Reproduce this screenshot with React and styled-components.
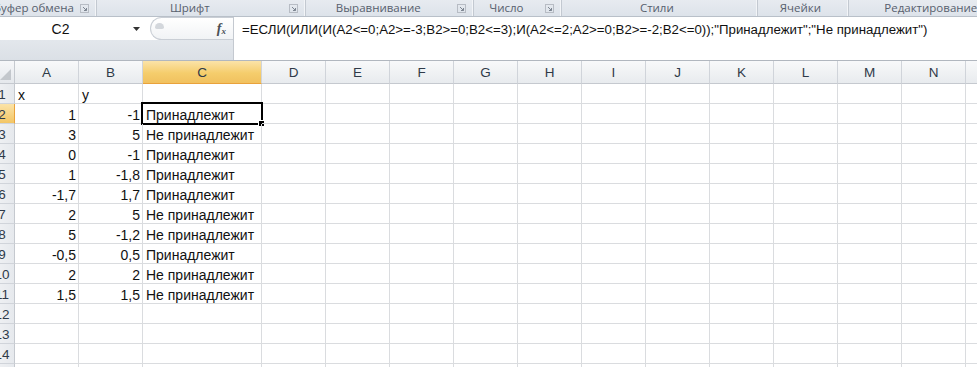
import React from 'react'
import styled, { createGlobalStyle } from 'styled-components'

const GlobalStyle = createGlobalStyle`
    html, body {
        margin: 0;
        padding: 0;
        background: #ffffff;
        overflow: hidden;
    }
`

const groups = [
    { label: 'Буфер обмена', width: 106, launcher: true, shift: 8 },
    { label: 'Шрифт', width: 209, launcher: true },
    { label: 'Выравнивание', width: 168, launcher: true },
    { label: 'Число', width: 88, launcher: true },
    { label: 'Стили', width: 196 },
    { label: 'Ячейки', width: 91 },
    { label: 'Редактирование', width: 170 },
]

const columns = [
    { name: 'A', width: 64 },
    { name: 'B', width: 64 },
    { name: 'C', width: 119 },
    ...'DEFGHIJKLMNO'.split('').map((name) => ({ name, width: 64 })),
]

const rows = [
    ['x', 'y', ''],
    ['1', '-1', 'Принадлежит'],
    ['3', '5', 'Не принадлежит'],
    ['0', '-1', 'Принадлежит'],
    ['1', '-1,8', 'Принадлежит'],
    ['-1,7', '1,7', 'Принадлежит'],
    ['2', '5', 'Не принадлежит'],
    ['5', '-1,2', 'Не принадлежит'],
    ['-0,5', '0,5', 'Принадлежит'],
    ['2', '2', 'Не принадлежит'],
    ['1,5', '1,5', 'Не принадлежит'],
    ['', '', ''],
    ['', '', ''],
    ['', '', ''],
    ['', '', ''],
]

const formula = '=ЕСЛИ(ИЛИ(И(A2<=0;A2>=-3;B2>=0;B2<=3);И(A2<=2;A2>=0;B2>=-2;B2<=0));"Принадлежит";"Не принадлежит")'

const App = () => {
    return (
        <Frame>
            <GlobalStyle />
            <Ribbon>
                {groups.map((g) => (
                    <Group key={g.label} $width={g.width}>
                        <GroupLabel $shift={g.shift || 0}>{g.label}</GroupLabel>
                        {g.launcher && (
                            <Launcher viewBox="0 0 9 9">
                                <rect x="0.5" y="0.5" width="8" height="8" fill="none" stroke="#b7bcc4" />
                                <path d="M3 3 L6.5 6.5 M4 6.5 H6.5 V4" stroke="#7d8591" fill="none" />
                            </Launcher>
                        )}
                    </Group>
                ))}
            </Ribbon>
            <Page>
                <FormulaBar>
                    <NameArea>
                        <NameRow>
                            <NameBox>
                                <NameText>C2</NameText>
                                <DropArrow viewBox="0 0 7 4">
                                    <path d="M0 0 H7 L3.5 4 Z" fill="#333" />
                                </DropArrow>
                            </NameBox>
                            <FxButton>
                                <Knob />
                                <Fx>
                                    f<sub>x</sub>
                                </Fx>
                            </FxButton>
                        </NameRow>
                        <NameShelf />
                    </NameArea>
                    <FormulaInput>{formula}</FormulaInput>
                </FormulaBar>
                <Sheet>
                    <HeaderRow>
                        <Corner>
                            <svg width="11" height="11" viewBox="0 0 11 11">
                                <path d="M11 0 V11 H0 Z" fill="#c3c7cc" />
                            </svg>
                        </Corner>
                        {columns.map((c) => (
                            <ColHeader key={c.name} $width={c.width} $active={c.name === 'C'}>
                                {c.name}
                            </ColHeader>
                        ))}
                    </HeaderRow>
                    {rows.map((r, i) => (
                        <Row key={i}>
                            <RowHeader $active={i === 1}>{i + 1}</RowHeader>
                            {columns.map((c, j) => {
                                const value = r[j] || ''
                                const numeric = i > 0 && j < 2
                                return (
                                    <Cell key={c.name} $width={c.width} $right={numeric}>
                                        {value}
                                        {i === 1 && c.name === 'C' && (
                                            <Selection>
                                                <Handle />
                                            </Selection>
                                        )}
                                    </Cell>
                                )
                            })}
                        </Row>
                    ))}
                </Sheet>
            </Page>
        </Frame>
    )
}

const Frame = styled.div`
    width: 977px;
    height: 367px;
    overflow: hidden;
    background: #ffffff;
`

const Ribbon = styled.div`
    display: flex;
    margin-left: -14px;
    height: 16px;
    border-bottom: 1px solid #b9c0c9;
    background: linear-gradient(#e7ebf0, #dde3ea);
`

const Group = styled.div`
    flex: 0 0 ${(p) => p.$width}px;
    box-sizing: border-box;
    display: flex;
    align-items: center;
    padding-right: 5px;
    border-right: 1px solid #c3c9d1;
    box-shadow: inset -1px 0 0 #f3f5f8;
`

const GroupLabel = styled.div`
    flex: 1;
    text-align: center;
    padding-left: ${(p) => p.$shift}px;
    font-family: 'Open Sans', 'Noto Sans', sans-serif;
    font-size: 11.5px;
    line-height: 16px;
    color: #57606d;
    white-space: nowrap;
`

const Launcher = styled.svg`
    width: 9px;
    height: 9px;
    margin-left: 6px;
    margin-right: 2px;
`

const Page = styled.div`
    margin-left: -10px;
    width: 1000px;
`

const FormulaBar = styled.div`
    display: flex;
    height: 43px;
    border-bottom: 1px solid #b1b7bf;
`

const NameArea = styled.div`
    flex: 0 0 243px;
    display: flex;
    flex-direction: column;
    border-right: 1px solid #c4c9d0;
`

const NameRow = styled.div`
    display: flex;
    height: 23px;
    background: #ffffff;
`

const NameBox = styled.div`
    flex: 0 0 157px;
    display: flex;
    align-items: center;
`

const NameText = styled.div`
    flex: 1;
    text-align: center;
    font-family: 'Liberation Sans', Arial, sans-serif;
    font-size: 14px;
    color: #111;
    padding-left: 4px;
`

const DropArrow = styled.svg`
    width: 7px;
    height: 4px;
    margin-left: 6px;
    margin-right: 7px;
`

const FxButton = styled.div`
    flex: 1;
    display: flex;
    align-items: center;
    justify-content: space-between;
    margin-left: 3px;
    padding: 0 7px 0 4px;
    border: 1px solid #c9ced5;
    border-right: none;
    border-radius: 12px 0 0 12px;
    background: linear-gradient(#ffffff, #f1f3f5);
`

const Knob = styled.div`
    width: 9px;
    height: 6px;
    border-radius: 5px 5px 2px 2px;
    background: #d3d7dc;
    margin-top: -6px;
`

const Fx = styled.div`
    font-family: 'Liberation Serif', 'Times New Roman', serif;
    font-style: italic;
    font-weight: bold;
    font-size: 14px;
    color: #4b4f55;

    & sub {
        font-size: 9px;
        vertical-align: -1px;
    }
`

const NameShelf = styled.div`
    flex: 1;
    background: linear-gradient(#e3e7ec, #dbe0e6);
`

const FormulaInput = styled.div`
    flex: 1;
    background: #ffffff;
    padding: 5px 0 0 8px;
    font-family: 'Liberation Sans', Arial, sans-serif;
    font-size: 13.25px;
    color: #111;
    white-space: nowrap;
`

const Sheet = styled.div`
    display: flex;
    flex-direction: column;
`

const HeaderRow = styled.div`
    display: flex;
    height: 23px;
`

const Corner = styled.div`
    flex: 0 0 25px;
    box-sizing: border-box;
    display: flex;
    align-items: flex-end;
    justify-content: flex-end;
    padding: 0 3px 3px 0;
    background: linear-gradient(#f6f7f9, #e5e8ec);
    border-right: 1px solid #c5c9cf;
    border-bottom: 1px solid #c5c9cf;
`

const ColHeader = styled.div`
    flex: 0 0 ${(p) => p.$width}px;
    box-sizing: border-box;
    display: flex;
    align-items: center;
    justify-content: center;
    font-family: 'Liberation Sans', Arial, sans-serif;
    font-size: 13.5px;
    color: #2f3a48;
    border-right: 1px solid #d0d4da;
    border-bottom: 1px solid ${(p) => (p.$active ? '#e9a23b' : '#c5c9cf')};
    background: ${(p) =>
        p.$active
            ? 'linear-gradient(#fbe3a8, #f5cd6c 55%, #f1c15f)'
            : 'linear-gradient(#f8f9fa, #e8ebee)'};
`

const Row = styled.div`
    display: flex;
    height: 20px;
`

const RowHeader = styled.div`
    flex: 0 0 25px;
    box-sizing: border-box;
    display: flex;
    align-items: center;
    justify-content: center;
    padding-top: 2px;
    font-family: 'Liberation Sans', Arial, sans-serif;
    font-size: 13.5px;
    color: #2f3a48;
    border-right: 1px solid ${(p) => (p.$active ? '#e9a23b' : '#c5c9cf')};
    border-bottom: 1px solid #d0d4da;
    background: ${(p) =>
        p.$active ? 'linear-gradient(#fbe3a8, #f3c665)' : 'linear-gradient(90deg, #f3f4f6, #e6e9ed)'};
`

const Cell = styled.div`
    position: relative;
    flex: 0 0 ${(p) => p.$width}px;
    box-sizing: border-box;
    display: flex;
    align-items: flex-end;
    justify-content: ${(p) => (p.$right ? 'flex-end' : 'flex-start')};
    padding: 0 2px 1px 3px;
    font-family: 'Liberation Sans', Arial, sans-serif;
    font-size: 14px;
    line-height: 14px;
    color: #111;
    white-space: nowrap;
    border-right: 1px solid #dadcdf;
    border-bottom: 1px solid #dadcdf;
`

const Selection = styled.div`
    position: absolute;
    left: -2px;
    top: -2px;
    right: -2px;
    bottom: -2px;
    border: 2px solid #000;
    pointer-events: none;
`

const Handle = styled.div`
    position: absolute;
    right: -4px;
    bottom: -4px;
    width: 5px;
    height: 5px;
    background: #000;
    border: 1px solid #fff;
`

export default App
